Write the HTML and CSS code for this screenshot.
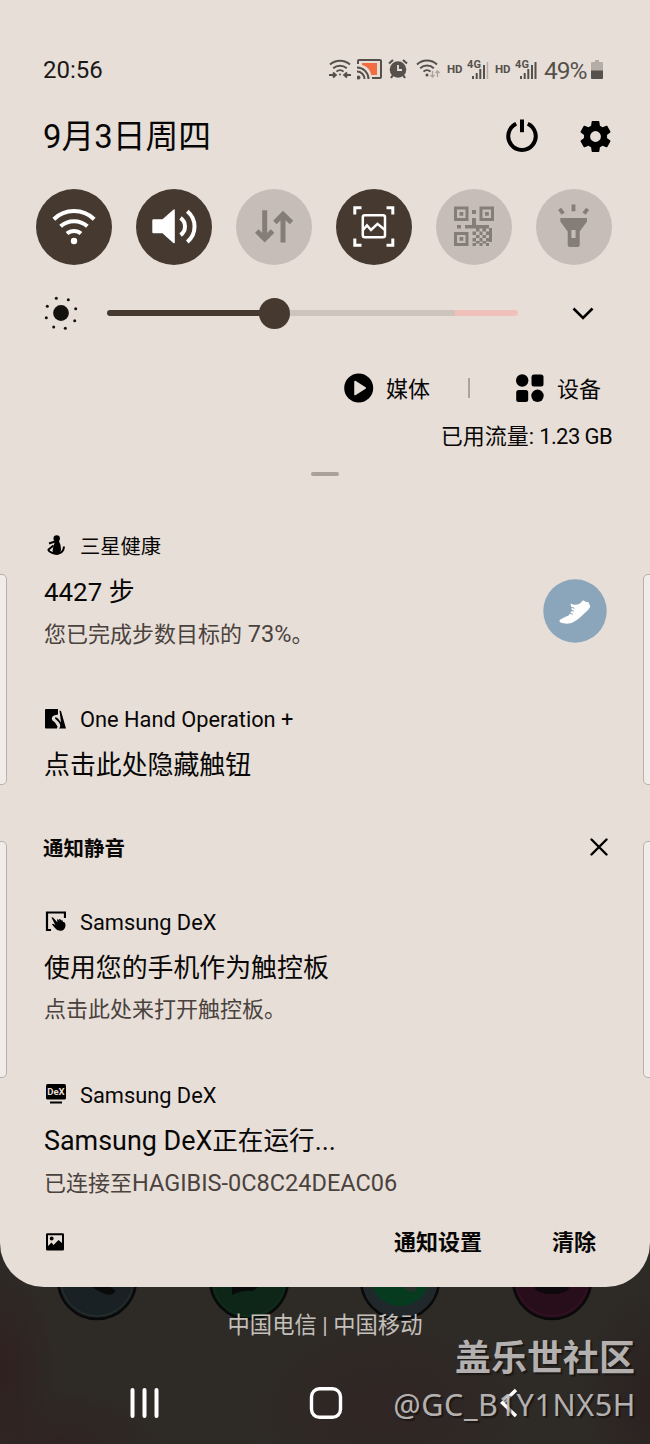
FILE: index.html
```
<!DOCTYPE html>
<html lang="zh-CN">
<head>
<meta charset="utf-8">
<title>通知面板</title>
<link rel="stylesheet" href="styles.css">
</head>
<body>
<div class="screen">
  <main class="panel">
    <header class="status">
      <span class="clock">20:56</span>
      <div class="status-icons">
        <svg class="st-hotspot" width="22" height="22" viewBox="0 0 22 22" fill="none" stroke="#55504b" stroke-width="2"><path d="M1 6.5A15 15 0 0 1 21 6.5M4.2 10.2A10.5 10.5 0 0 1 17.8 10.2M7.5 13.6A5 5 0 0 1 14.500 13.600"/><path d="M0 17H6M22 17H16M4 14.500L6.800 17L4 19.500M18 14.500L15.200 17L18 19.500"/><circle cx="11" cy="16.500" r="1" fill="#55504b" stroke="none"/></svg>
        <svg class="st-cast" width="25" height="22" viewBox="0 0 25 22" fill="none" stroke="#55504b" stroke-width="2"><path d="M5 5H20V17H14A11 11 0 0 0 5 7Z" fill="#f26d42" stroke="none"/><path d="M1 6V3Q1 2 2 2H23Q24 2 24 3V19Q24 20 23 20H15M0 9.500A11.500 11.500 0 0 1 11.500 21M0 13.500A7.500 7.500 0 0 1 7.500 21"/><circle cx="1.500" cy="19.500" r="2" fill="#55504b" stroke="none"/></svg>
        <svg class="st-alarm" width="20" height="22" viewBox="0 0 20 22" fill="none" stroke="#55504b" stroke-width="2.200"><circle cx="10" cy="11.500" r="8.300" fill="#55504b" stroke="none"/><path d="M1 5.500L5 2M19 5.500L15 2M5 17L3 20M15 17L17 20"/><path d="M10 7V12H14" stroke="#e7ded8" stroke-width="1.800"/></svg>
        <svg class="st-wifi" width="24" height="22" viewBox="0 0 24 22" fill="none" stroke="#55504b" stroke-width="2"><path d="M1 6.500A14.500 14.500 0 0 1 21 6.500M4.200 10.200A10 10 0 0 1 17.800 10.200M7.500 13.600A5 5 0 0 1 14.500 13.600"/><circle cx="11" cy="17" r="1.500" fill="#55504b" stroke="none"/><path d="M16.500 13V19M14.500 17L16.500 19L18.500 17M21.500 19V13M19.500 15L21.500 13L23.500 15" stroke="#aaa29c" stroke-width="1.300"/></svg>
        <span class="hd">HD</span>
        <svg class="st-signal" width="22" height="22" viewBox="0 0 22 22" fill="#55504b"><text class="g4" x="0" y="10" textLength="14">4G</text><path d="M5 18h2v3H5zM8.700 15h2v6h-2zM12.300 11h2v10h-2zM16 7h2v14h-2z"/><path d="M19.700 4h1.500v17h-1.500z" fill="#b5aca6"/></svg>
        <span class="hd hd2">HD</span>
        <svg class="st-signal" width="22" height="22" viewBox="0 0 22 22" fill="#55504b"><text class="g4" x="0" y="10" textLength="14">4G</text><path d="M5 18h2v3H5zM8.700 15h2v6h-2zM12.300 11h2v10h-2zM16 7h2v14h-2zM19.500 4h2v17h-2z"/></svg>
        <span class="percent">49%</span>
        <svg class="st-battery" width="12" height="22" viewBox="0 0 12 22"><path d="M4 2h4v2h3q1 0 1 1v8H0V5q0-1 1-1h3z" fill="#b5aca6"/><path d="M0 12.500h12V20q0 1-1 1H1q-1 0-1-1z" fill="#55504b"/></svg>
      </div>
    </header>

    <section class="date-row">
      <h1 class="date">9月3日周四</h1>
      <div class="date-actions">
        <svg width="34" height="34" viewBox="0 0 34 34"><path d="M11.200 4.800A13.700 13.700 0 1 0 22.800 4.800" fill="none" stroke="#000" stroke-width="4"/><path d="M15 .5h4v12.700h-4z"/></svg>
        <svg width="37" height="37" viewBox="0 0 24 24"><path d="M19.430 12.980c.04-.32.07-.64.07-.98s-.03-.66-.07-.98l2.110-1.650c.19-.15.24-.42.12-.64l-2-3.460c-.12-.22-.39-.3-.61-.22l-2.490 1c-.52-.4-1.080-.73-1.690-.98l-.38-2.650C14.460 2.180 14.250 2 14 2h-4c-.25 0-.46.18-.49.42l-.38 2.650c-.61.25-1.170.59-1.690.98l-2.490-1c-.23-.09-.49 0-.61.22l-2 3.460c-.13.22-.07.49.12.64l2.110 1.650c-.04.32-.07.65-.07.98s.03.66.07.98l-2.110 1.650c-.19.15-.24.42-.12.64l2 3.460c.12.22.39.3.61.22l2.490-1c.52.4 1.080.73 1.690.98l.38 2.650c.03.24.24.42.49.42h4c.25 0 .46-.18.49-.42l.38-2.650c.61-.25 1.170-.59 1.690-.98l2.490 1c.23.09.49 0 .61-.22l2-3.460c.12-.22.07-.49-.12-.64zM12 15.500a3.500 3.500 0 1 1 0-7 3.500 3.500 0 0 1 0 7z"/></svg>
      </div>
    </section>

    <section class="toggles">
      <div class="toggle on"><svg viewBox="0 0 76 76"><g class="line" stroke-width="4"><path d="M17.800 30.300A29 29 0 0 1 58.200 30.300M24.600 37.300A20 20 0 0 1 51.400 37.300M31 44.600A10.500 10.500 0 0 1 45 44.600"/></g><circle cx="38" cy="52" r="3.200"/></svg></div>
      <div class="toggle on"><svg viewBox="0 0 76 76"><path d="M17.300 30.300H26.500L37.300 20.700Q38.800 19.700 38.800 21.500V53.200Q38.800 55 37.300 54L26.500 44.300H17.300Q16.300 44.300 16.300 43.300V31.300Q16.300 30.300 17.300 30.300Z"/><g class="line" stroke-width="4"><path d="M44.500 28.800A10.500 10.500 0 0 1 44.500 46M51.300 22.200A20 20 0 0 1 51.300 53"/></g></svg></div>
      <div class="toggle"><svg viewBox="0 0 76 76"><g class="line" stroke-width="5"><path d="M28.700 21.300V50M20.800 42L28.700 50L36.600 42M47 53.500V25M38.900 33.500L47 25.300L55.500 33.500"/></g></svg></div>
      <div class="toggle on"><svg viewBox="0 0 76 76"><g class="line" stroke-width="3"><path d="M18.800 25.500V18.800H25.500M50.500 18.800H56.800V25.500M56.800 49.500V56.300H50.500M25.500 56.300H18.800V49.500"/><rect x="26.800" y="26.300" width="22.200" height="22" rx="2" stroke-width="2.500"/><path d="M27 41L31 36.500L35 41L41.500 34.800L49 41" stroke-width="2.500"/></g></svg></div>
      <div class="toggle"><svg viewBox="0 0 76 76"><path fill-rule="evenodd" d="M18 17.500h14.500V32H18zM21 20.500V29h8.500v-8.500zM43.500 17.500H58V32H43.500zM46.500 20.500V29H55v-8.500zM18 43h14.500v14H18zM21 46v8h8.500v-8z"/><path d="M23.500 23h3.800v3.800h-3.800zM49 23h3.800v3.800H49zM23.500 48h3.800v3.800h-3.800zM36 21h4v4h-4zM36 29h4v8h-4zM21 36h4v3.500h-4zM29 36h11v3.500H29z"/><path d="M40 36h3.500v3.500H40zM46.500 36H53v3.500h-6.500zM36.500 42.500H40V46h-3.500zM36.500 49H40v3.500h-3.500zM36.500 54H40v3h-3.500zM40 39.500h3.500v3H40zM40 46h3.500v3H40zM40 52h3.500v2.500H40zM43.500 42.500h3V46h-3zM43.500 49h3v3.500h-3zM43.500 54h3v3h-3zM43.500 36h3v3.500h-3zM46.500 39.500H50v3h-3.500zM46.500 46H50v3h-3.500zM46.500 52H50v2.500h-3.500zM50 42.500h6V46h-6zM53 39h3v4h-3zM50 49h3v3.500h-3zM53 46h3v7h-3zM50 54h3v3h-3z"/></svg></div>
      <div class="toggle"><svg viewBox="0 0 76 76"><path fill-rule="evenodd" d="M24.300 29H51V32.500L43.700 42.500V56Q43.700 58 41.700 58H33.700Q31.700 58 31.700 56V42.500L24.300 32.500ZM35.400 41V49H39.600V41Z"/><g class="line" stroke-width="3.800"><path d="M37.500 15.500V22.300M23.600 19.800L27.200 24.700M51.600 19.800L48 24.700"/></g></svg></div>
    </section>

    <section class="brightness">
      <svg class="sun" width="36" height="36" viewBox="-18 -18 36 36" fill="#14120f"><circle r="7.900"/><g><circle cx="-4.700" cy="-14.700" r="1.500"/><circle cx="7.300" cy="-13.300" r="1.500"/><circle cx="14.700" cy="-4.300" r="1.500"/><circle cx="13.700" cy="7.700" r="1.500"/><circle cx="4.300" cy="15.300" r="1.500"/><circle cx="-7.300" cy="14" r="1.500"/><circle cx="-14.700" cy="4.700" r="1.500"/><circle cx="-13.700" cy="-6.700" r="1.500"/></g></svg>
      <div class="slider"><span class="fill"></span><span class="thumb"></span><span class="rest"></span><span class="hot"></span></div>
      <svg class="chevron" width="24" height="14" viewBox="0 0 24 14"><path d="M2.500 2.500L12 12L21.500 2.500" fill="none" stroke="#000" stroke-width="2.600"/></svg>
    </section>

    <section class="shortcuts">
      <svg width="30" height="30" viewBox="0 0 30 30"><circle cx="14.700" cy="15" r="14.500"/><path d="M11 8.500L21.200 15L11 21.500Z" fill="#e7ded8" stroke="#e7ded8" stroke-width="1.500" stroke-linejoin="round"/></svg>
      <span class="short-label">媒体</span>
      <i class="divider"></i>
      <svg width="28" height="28" viewBox="0 0 28 28"><circle cx="6.200" cy="6.500" r="6.200"/><rect x="15.500" y=".5" width="12" height="12" rx="2.500"/><rect x=".2" y="16" width="12" height="12" rx="2.500"/><circle cx="21.500" cy="21.800" r="6.200"/></svg>
      <span class="short-label device">设备</span>
    </section>
    <p class="usage"><span>已用流量:</span><span class="usage-num">1.23 GB</span></p>
    <div class="grip"></div>

    <section class="note-list">
      <article class="note with-badge">
        <div class="note-main">
          <div class="app"><svg width="22" height="22" viewBox="0 0 22 22"><circle cx="12.700" cy="3.500" r="3.200"/><path d="M11.500 5H14.500L16.500 10L17 15L15.500 19Q13 20.500 10 19.500L8.500 16L9.500 11Z"/><path d="M5 8.500L11 6.500M9.500 10.500L4.500 14.500Q4 16.500 10 18.500M14 18.500Q19.500 18 20 11.500" fill="none" stroke="#000" stroke-width="2"/></svg><span class="cn">三星健康</span></div>
          <h2>4427 步</h2>
          <p class="text">您已完成步数目标的<span class="pct"> 73%</span><span>。</span></p>
        </div>
        <svg class="badge" width="64" height="64" viewBox="0 0 64 64"><circle cx="32" cy="32" r="31.700" fill="#8ba5ba"/><path d="M16.500 41Q21 38 25.500 36.500L29 31.500L27.500 24.500Q30 26 33 25.700Q36.500 25.500 38.500 23L40 21.300Q43 23.500 45.500 23.300L47.300 27.500L45.500 30.500L37 38.500Q31.500 43 27.500 44.300Q22 45.300 16.800 43.300Z" fill="#fff"/><path d="M26 34.200L30 35.200M27 31.200L31 32.200M27.500 28.200L31.500 29.200" stroke="#8ba5ba" stroke-width="1"/></svg>
      </article>
      <article class="note">
        <div class="app"><svg width="22" height="22" viewBox="0 0 22 22"><path d="M2 1H14V6.500L10 7.500Q6.500 9.500 8.500 12.500L11 14.500L13.500 18.500L13 20.500H2Q1 20.500 1 19.500V2Q1 1 2 1Z"/><path d="M15.500 2.500L17 3L22 20.500H15Q17.500 18 15 14.500L11 10.500L11.500 9L14 10.500L17 14.500Z"/></svg><span class="en">One Hand Operation +</span></div>
        <h2>点击此处隐藏触钮</h2>
      </article>
      <div class="silent"><h3>通知静音</h3><svg width="18" height="18" viewBox="0 0 18 18"><path d="M1.500 1.500L16.500 16.500M16.500 1.500L1.500 16.500" stroke="#000" stroke-width="2.400" stroke-linecap="round"/></svg></div>
      <article class="note">
        <div class="app"><svg width="22" height="22" viewBox="0 0 22 22"><path d="M7 19H3V1.500H21V7" fill="none" stroke="#000" stroke-width="2.200"/><path d="M7.500 6.500Q8.500 6 9.500 7L13.500 11.500L13 8.500Q14.500 7.500 15.200 10V8Q16.800 7.500 17.300 10V9Q19 9 19 11Q21.500 10.500 21.500 15Q20.500 20 16.500 19.800Q13 20 11 17L8 13.500Q8.500 12 10.500 13.500L11.500 14.500Z"/></svg><span class="en">Samsung DeX</span></div>
        <h2>使用您的手机作为触控板</h2>
        <p class="text">点击此处来打开触控板<span>。</span></p>
      </article>
      <article class="note last">
        <div class="app"><svg width="22" height="22" viewBox="0 0 22 22"><rect x="2" y="0" width="20" height="15.500" rx="1.500"/><path d="M6 17.500h12v2H6z"/><text class="dex" x="3.200" y="11" textLength="17.500" lengthAdjust="spacingAndGlyphs">DeX</text></svg><span class="en">Samsung DeX</span></div>
        <h2><span class="title-en">Samsung DeX</span><span class="title-cn">正在运行</span><span class="title-en">...</span></h2>
        <p class="text">已连接至<span class="host">HAGIBIS-0C8C24DEAC06</span></p>
      </article>
    </section>

    <footer class="panel-footer">
      <svg width="20" height="20" viewBox="0 0 20 20"><path fill-rule="evenodd" d="M2 1.300H17.700Q19 1.300 19 2.600V17.300Q19 18.600 17.700 18.600H2.300Q1 18.600 1 17.300V2.600Q1 1.300 2.300 1.300ZM3 3.300V14L6.500 10.500L8.500 13L13.500 8L17 11V3.300Z"/><circle cx="6.700" cy="6.500" r="1.900"/></svg>
      <b class="manage">通知设置</b><b>清除</b>
    </footer>
  </main>

  <div class="home">
    <svg class="dock" width="650" height="36" viewBox="0 1287 650 36">
      <g stroke="#090909" stroke-width="2.500"><circle cx="97" cy="1280" r="39" fill="#1a2124"/><circle cx="249" cy="1280" r="39" fill="#0d2618"/><circle cx="400" cy="1280" r="39" fill="#20282b"/><circle cx="552" cy="1280" r="39" fill="#280d1b"/></g>
      <g fill="none" stroke="#2b3332"><circle cx="97" cy="1280" r="36"/><circle cx="249" cy="1280" r="36" stroke="#16301f"/><circle cx="552" cy="1280" r="36" stroke="#38142a"/></g>
      <path d="M88 1284Q101 1294 110 1295Q116 1293 115 1290L106 1284ZM232 1284V1295Q242 1290 252 1291Q259 1288 260 1284Z" fill="#090b0b"/>
      <circle cx="400" cy="1276" r="30" fill="#063b20"/><path d="M401 1285Q409 1294 416 1291V1285Z" fill="#28302b"/><path d="M535 1285H569V1289Q564 1294 552 1294Q540 1294 535 1289Z" fill="#0c080b"/>
    </svg>
    <p class="carriers">中国电信 | 中国移动</p>
    <nav class="nav">
      <svg width="32" height="34" viewBox="0 0 32 34"><path d="M4.500 4V30M16.500 4V30M28.500 4V30" stroke="#fff" stroke-width="4" stroke-linecap="round"/></svg>
      <svg width="36" height="34" viewBox="0 0 36 34"><rect x="3.500" y="2.800" width="29" height="28.500" rx="8" fill="none" stroke="#fff" stroke-width="3.400"/></svg>
      <svg width="32" height="34" viewBox="0 0 32 34"><path d="M24 4L10.500 17L24 30" fill="none" stroke="#fff" stroke-width="3.400"/></svg>
    </nav>
  </div>

  <i class="edge left upper"></i><i class="edge right upper"></i>
  <i class="edge left lower"></i><i class="edge right lower"></i>
  <div class="watermark"><strong>盖乐世社区</strong><span>@GC_B1Y1NX5H</span></div>
</div>
</body>
</html>
```
FILE: styles.css
```
* { box-sizing: border-box; }
body, h1, h2, h3, p { margin: 0; font-weight: 400; }
body { background: #2d2a26; font-family: Roboto, "Noto Sans CJK SC", sans-serif; color: #080706; }
svg { display: block; flex: none; }
.screen {
  position: relative; width: 650px; height: 1444px; overflow: hidden; white-space: nowrap;
  background: radial-gradient(ellipse 60px 110px at 0 1370px, #302020, transparent),
    radial-gradient(ellipse 110px 60px at 60px 1444px, #2f2322, transparent),
    radial-gradient(ellipse 150px 100px at 390px 1410px, #302524, transparent),
    radial-gradient(ellipse 70px 120px at 650px 1400px, #2b2120, transparent), #2e2b27;
}
.panel { height: 1287px; padding-top: 50px; background: #e7ded8; border-radius: 0 0 44px 44px; display: flex; flex-direction: column; }

.status { height: 40px; padding: 0 47px 0 43px; display: flex; align-items: center; justify-content: space-between; color: #3c3733; }
.clock { font-size: 24px; color: #1b1917; }
.status-icons { display: flex; align-items: center; margin-top: -2px; color: #55504b; }
.st-cast { margin-left: 6px; }
.st-alarm { margin-left: 6px; }
.st-wifi { margin-left: 8px; }
.hd { width: 16px; margin-left: 7px; font-size: 11.500px; font-weight: 700; }
.hd2 { margin-left: 6px; }
.st-signal { margin-left: 4px; }
.g4 { font: 700 11px Roboto, sans-serif; }
.percent { width: 43px; margin-left: 7px; font-size: 24.500px; letter-spacing: -1px; margin-top: 2px; }
.st-battery { margin-left: 4px; }

.date-row { height: 60px; margin-top: 16px; padding: 0 36px 0 43px; display: flex; align-items: center; justify-content: space-between; }
.date { padding-top: 2px; font-size: 32.800px; line-height: 60px; }
.date-actions { display: flex; align-items: center; gap: 38px; }

.toggles { margin-top: 23px; padding-left: 36px; display: flex; gap: 24px; }
.toggle { width: 76px; height: 76px; border-radius: 50%; background: #c6bdb8; color: #857d78; }
.toggle.on { background: #463930; color: #fff; }
.toggle svg { width: 76px; height: 76px; fill: currentColor; }
.toggle .line { fill: none; stroke: currentColor; }

.brightness { height: 40px; margin-top: 28px; padding: 0 55px 0 43px; display: flex; align-items: center; }
.slider { width: 411px; height: 40px; margin-left: 28px; display: flex; align-items: center; }
.slider .fill { width: 153px; height: 6px; background: #463930; border-radius: 3px 0 0 3px; }
.slider .thumb { width: 31px; height: 31px; margin-left: -1px; border-radius: 50%; background: #463930; }
.slider .rest { flex: 1; height: 6px; background: #cdc4be; }
.slider .hot { width: 63px; height: 6px; background: #f2c0bb; border-radius: 0 3px 3px 0; }
.chevron { margin-left: 53px; }

.shortcuts { height: 40px; margin-top: 35px; padding-left: 344px; display: flex; align-items: center; }
.short-label { margin-left: 12px; padding-top: 3px; font-size: 22px; line-height: 40px; }
.short-label.device { margin-left: 13px; }
.divider { width: 2px; height: 20px; margin: 0 46px 0 38px; background: #aba39d; }
.usage { height: 30px; margin-top: 14px; padding-right: 38px; display: flex; justify-content: flex-end; gap: 5px; font-size: 22px; line-height: 30px; }
.usage-num { letter-spacing: -.6px; }
.grip { width: 28px; height: 4px; margin: 20px 0 0 311px; border-radius: 2px; background: #aaa19b; }

.note-list { margin-top: 48px; padding-left: 44px; }
.note { margin-bottom: 47px; }
.note.last { margin-bottom: 0; }
.with-badge { display: flex; justify-content: space-between; align-items: center; padding-right: 43px; }
.badge { margin-top: 47px; }
.app { height: 44px; display: flex; align-items: center; gap: 14px; }
.cn { font-size: 20.300px; margin-top: -2px; }
.en { font-size: 21.800px; }
h2 { height: 48px; font-size: 25.900px; line-height: 48px; }
.title-en { font-size: 26.900px; }
.title-cn { font-size: 25.600px; }
.text { height: 34px; padding-top: 1px; font-size: 22px; line-height: 34px; color: #4a423d; }
.pct, .host { font-size: 23.500px; }
.silent { height: 44px; margin: -11px 42px 31px 0; display: flex; align-items: center; justify-content: space-between; }
h3 { margin-left: -1px; font-size: 20.500px; font-weight: 700; }
.panel-footer { height: 44px; margin-top: 21px; padding: 0 54px 0 45px; display: flex; align-items: center; font-size: 22px; }
.panel-footer b { margin-top: -4px; font-weight: 700; }
.panel-footer .manage { margin: -4px 70px 0 auto; }

.home { height: 157px; }
.carriers { margin-top: -13px; height: 30px; text-align: center; font-size: 22.300px; line-height: 30px; color: #c4c0bc; }
.nav { margin-top: 46px; padding: 0 126px 0 128px; display: flex; justify-content: space-between; }

.edge { position: absolute; width: 12px; background: #f1ece9; border: 1px solid #b9b0aa; border-radius: 5px; }
.left { left: -5px; }
.right { right: -5px; }
.upper { top: 574px; height: 211px; }
.lower { top: 841px; height: 237px; }
.watermark { position: absolute; right: 15px; top: 1334px; display: flex; flex-direction: column; align-items: flex-end; color: rgba(200, 197, 196, .9); text-shadow: 2px 2px 1px rgba(15, 13, 12, .6); }
.watermark strong { font-size: 36px; line-height: 50px; }
.watermark span { margin-right: -1px; font: 30.500px/40px "Noto Sans", sans-serif; letter-spacing: .6px; }
.dex { font: 700 9px Roboto, sans-serif; fill: #e7ded8; }
```
